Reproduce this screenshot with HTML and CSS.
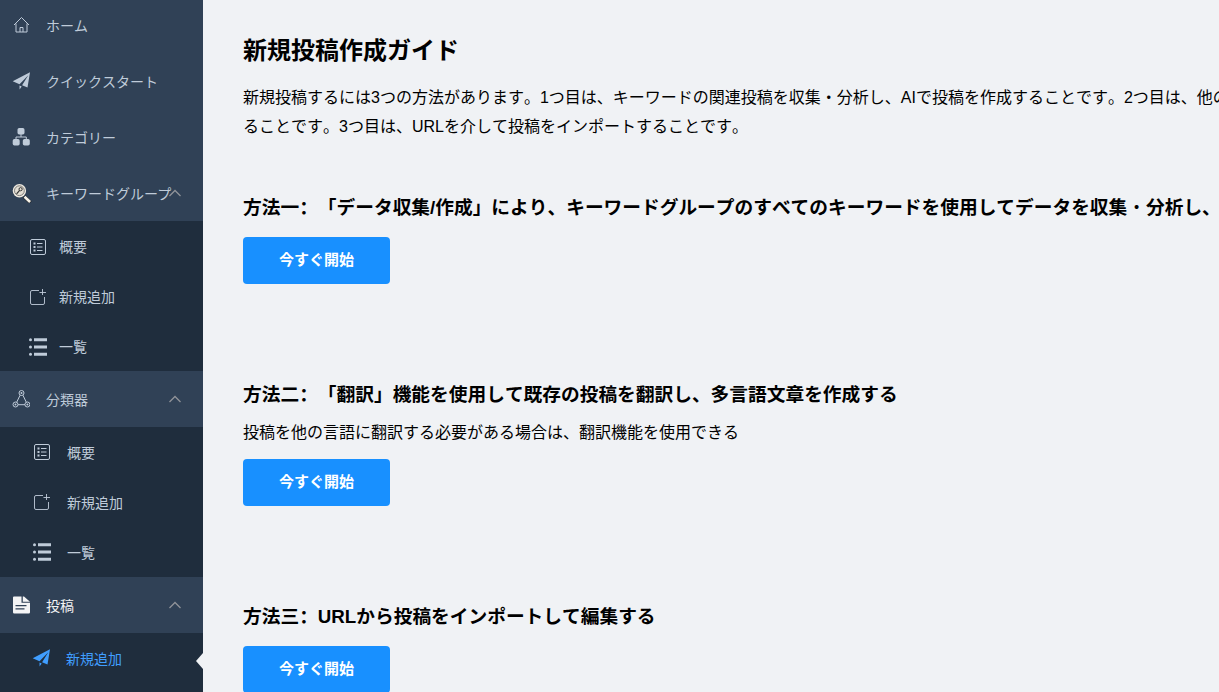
FILE: index.html
```html
<!DOCTYPE html>
<html lang="ja">
<head>
<meta charset="utf-8">
<title>新規投稿作成ガイド</title>
<link rel="stylesheet" href="styles.css">
</head>
<body>
<svg class="sprite" aria-hidden="true">
  <symbol id="home" viewBox="0 0 18 18"><path d="M2 9 9.500 1.500 17 9M4 7.500v8.500h11V7.500M8 16v-4.500h3V16" fill="none" stroke="currentColor" stroke-width="1"/></symbol>
  <symbol id="plane" viewBox="0 0 18 18"><path d="M18 .3 15.500 15.500 10.100 13.200 16.300 3.200 7.500 12.200.7 9.200zM7.500 13.500l2.200.9-2.100 3.200z" fill="currentColor"/></symbol>
  <symbol id="tree" viewBox="0 0 18 18"><g fill="currentColor"><rect x="5.500" y="0" width="7" height="6.500" rx="1.700"/><rect x=".7" y="11" width="7" height="6.500" rx="1.700"/><rect x="10.800" y="11" width="7" height="6.500" rx="1.700"/></g><path d="M9 6v3M4 11.500V9h10.300v2.500" fill="none" stroke="currentColor"/></symbol>
  <symbol id="search" viewBox="0 0 20 20"><path d="m12 13.500 6.500 6" stroke="#222" stroke-width="3.400"/><path d="m12.500 13.700 5.600 5.300" stroke="#f5f2ea" stroke-width="2.600"/><circle cx="7.400" cy="7.700" r="6.700" fill="#eee9df"/><circle cx="7.400" cy="7.700" r="4.900" fill="#e4dfd4" stroke="#666" stroke-width=".8"/><circle cx="8.600" cy="6.200" r="1.600" fill="none" stroke="#333"/><path d="M7.600 7.400 4.600 10.800" stroke="#333" stroke-width="1.200"/></symbol>
  <symbol id="overview" viewBox="0 0 18 18"><rect x="1.500" y="1.500" width="15" height="15" rx="1.500" fill="none" stroke="currentColor"/><path d="M4.500 5.500h2M4.500 9h2M4.500 12.500h2" stroke="currentColor" stroke-width="1.800"/><path d="M8 5.500h5.500M8 9h5.500M8 12.500h5.500" stroke="currentColor" stroke-width="1"/></symbol>
  <symbol id="add" viewBox="0 0 18 18"><path d="M10 2.500H3q-1.500 0-1.500 1.500v11q0 1.500 1.500 1.500h11q1.500 0 1.500-1.500V9M13.500 1v6M10.500 4.500h6.500" fill="none" stroke="currentColor" stroke-width=".9"/></symbol>
  <symbol id="list" viewBox="0 0 18 18"><path d="M5 1.800h13M5 9h13M5 16.200h13" stroke="currentColor" stroke-width="3"/><g fill="currentColor"><circle cx="1.500" cy="1.800" r="1.500"/><circle cx="1.500" cy="9" r="1.500"/><circle cx="1.500" cy="16.200" r="1.500"/></g></symbol>
  <symbol id="nodes" viewBox="0 0 18 18"><g fill="none" stroke="currentColor" stroke-width="1"><circle cx="9.500" cy="3" r="2.500"/><circle cx="3.500" cy="14.500" r="2.500"/><circle cx="15.400" cy="14.500" r="2.500"/><path d="M8.100 5.200 4.700 12.200M10.900 5.200l3.400 7M6 14.700h7"/></g><g fill="currentColor"><circle cx="9.500" cy="3" r="1"/><circle cx="3.500" cy="14.500" r="1"/><circle cx="15.400" cy="14.500" r="1"/></g></symbol>
  <symbol id="doc" viewBox="0 0 18 18"><path fill-rule="evenodd" d="M2 .5H9.500v6.300H18v9.400q0 1.300-1.300 1.300H2.300Q1 17.500 1 16.200V1.500Q1 .5 2 .5zM3.500 9v1.200h11V9zm0 3.200v1.200h9v-1.200zM10.800.5h1.200l6 5.200h-7.200z" fill="currentColor"/></symbol>
  <symbol id="chevron" viewBox="0 0 12 12"><path d="M.5 9 6 3.500 11.500 9" fill="none" stroke="currentColor" stroke-width="1.300"/></symbol>
</svg>
<div class="layout">
  <nav class="sidebar">
    <a class="item" href="#"><svg class="icon"><use href="#home"/></svg><span>ホーム</span></a>
    <a class="item" href="#"><svg class="icon"><use href="#plane"/></svg><span>クイックスタート</span></a>
    <a class="item" href="#"><svg class="icon"><use href="#tree"/></svg><span>カテゴリー</span></a>
    <button class="item" type="button" aria-expanded="true"><svg class="icon search"><use href="#search"/></svg><span>キーワードグループ</span><svg class="chevron"><use href="#chevron"/></svg></button>
    <div class="submenu compact">
      <a class="subitem" href="#"><svg class="icon"><use href="#overview"/></svg><span>概要</span></a>
      <a class="subitem" href="#"><svg class="icon"><use href="#add"/></svg><span>新規追加</span></a>
      <a class="subitem" href="#"><svg class="icon"><use href="#list"/></svg><span>一覧</span></a>
    </div>
    <button class="item" type="button" aria-expanded="true"><svg class="icon"><use href="#nodes"/></svg><span>分類器</span><svg class="chevron"><use href="#chevron"/></svg></button>
    <div class="submenu">
      <a class="subitem" href="#"><svg class="icon"><use href="#overview"/></svg><span>概要</span></a>
      <a class="subitem" href="#"><svg class="icon"><use href="#add"/></svg><span>新規追加</span></a>
      <a class="subitem" href="#"><svg class="icon"><use href="#list"/></svg><span>一覧</span></a>
    </div>
    <button class="item open" type="button" aria-expanded="true"><svg class="icon"><use href="#doc"/></svg><span>投稿</span><svg class="chevron"><use href="#chevron"/></svg></button>
    <div class="submenu">
      <a class="subitem active" href="#" aria-current="page"><svg class="icon"><use href="#plane"/></svg><span>新規追加</span></a>
    </div>
  </nav>
  <main class="content">
    <h1 class="title">新規投稿作成ガイド</h1>
    <p class="text">新規投稿するには3つの方法があります。1つ目は、キーワードの関連投稿を収集<span class="dot">&#x30FB;</span>分析し、AIで投稿を作成することです。2つ目は、他の<br>ることです。3つ目は、URLを介して投稿をインポートすることです。</p>
    <section class="method">
      <h3 class="heading">方法一<span lang="zh-CN">：</span>「データ収集/作成」により、キーワードグループのすべてのキーワードを使用してデータを収集<span class="dot">&#x30FB;</span>分析し、</h3>
      <button class="start" type="button">今すぐ開始</button>
    </section>
    <section class="method">
      <h3 class="heading">方法二<span lang="zh-CN">：</span>「翻訳」機能を使用して既存の投稿を翻訳し、多言語文章を作成する</h3>
      <p class="note">投稿を他の言語に翻訳する必要がある場合は、翻訳機能を使用できる</p>
      <button class="start" type="button">今すぐ開始</button>
    </section>
    <section class="method">
      <h3 class="heading">方法三<span lang="zh-CN">：</span>URLから投稿をインポートして編集する</h3>
      <button class="start" type="button">今すぐ開始</button>
    </section>
  </main>
</div>
</body>
</html>
```

FILE: styles.css
```css
* { box-sizing: border-box; }
body {
  margin: 0;
  background: #f0f2f5;
  color: #000;
  font-family: "Liberation Sans", "Noto Sans CJK SC", sans-serif;
  font-size: 16px;
  font-kerning: none;
  text-spacing-trim: space-all;
}
button { font-family: inherit; border: 0; cursor: pointer; }
.sprite { display: none; }
.layout { display: flex; height: 100vh; overflow: hidden; }

.sidebar {
  flex: none;
  width: 203px;
  overflow: hidden;
  background: #1f2d3d;
}
.item, .subitem {
  display: flex;
  align-items: center;
  width: 100%;
  color: #bfcbd9;
  font-size: 14px;
  line-height: 20px;
  text-decoration: none;
  white-space: nowrap;
}
.item {
  height: 56px;
  padding: 0 22px 0 12px;
  background: #304156;
}
.item:first-child { height: 53px; padding-bottom: 3px; }
.item span, .subitem span { padding-top: 2px; margin-left: 16px; }
.icon { flex: none; width: 18px; height: 18px; }
.search { width: 20px; height: 20px; }
.item .search + span { margin-left: 14px; }
.chevron {
  flex: none;
  width: 12px;
  height: 12px;
  margin-left: auto;
  color: #909399;
}
.search ~ .chevron { margin-left: -2px; }
.open { color: #f4f4f5; }
.subitem {
  position: relative;
  height: 50px;
  padding-left: 33px;
}
.compact .subitem { padding: 2px 0 0 29px; }
.compact .subitem span { padding-top: 0; margin-left: 12px; }
.subitem.active { padding-left: 32px; color: #409eff; }
.active::after {
  content: "";
  position: absolute;
  right: 0;
  top: 20px;
  border: 8px solid transparent;
  border-left: 0;
  border-right: 7px solid #f0f2f5;
}

.content {
  flex: 1;
  min-width: 0;
  padding: 35px 0 0 40px;
  overflow: hidden;
  white-space: nowrap;
}
.title { margin: 0 0 16px; font-size: 24px; line-height: 32px; }
.text, .note { margin: 0; line-height: 29px; }
.text { margin-bottom: 53px; }
.note { margin: -6px 0 12px; }
.method { margin-bottom: 97px; }
.heading { margin: 0 0 15px; line-height: 28px; }
.dot {
  display: inline-block;
  width: 1em;
  line-height: 1;
  text-align: center;
  font-weight: 400;
}
.start {
  display: block;
  height: 47px;
  padding: 0 36px 4px;
  border-radius: 4px;
  background: #1890ff;
  color: #fff;
  font-size: 15px;
  font-weight: 700;
}
```
